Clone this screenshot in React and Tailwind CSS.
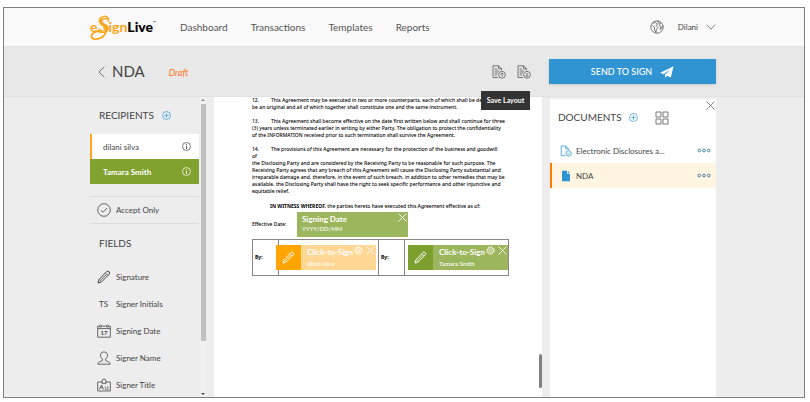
import React from 'react';

const navLinks = ['Dashboard', 'Transactions', 'Templates', 'Reports'];

const documents = [
  { name: 'Electronic Disclosures a...', active: false },
  { name: 'NDA', active: true },
];

const PenIcon = ({ className }) => (
  <svg viewBox="0 0 14 14" className={className} fill="none" stroke="currentColor" strokeWidth="1">
    <path d="M1 13 L2.2 9.4 L9.6 1.6 Q10.8 .6 12 1.8 Q13.2 3 12.2 4.2 L4.6 11.8 Z" />
    <path d="M8.4 2.9 L11 5.5 M2.2 9.4 L4.6 11.8 M4 9.9 L9.3 4.5" strokeWidth=".8" />
  </svg>
);

const CalendarIcon = () => (
  <svg viewBox="0 0 14 14" className="h-[14px] w-[14px]" fill="none" stroke="currentColor" strokeWidth="0.8">
    <path d="M2.3 2.2 H.7 V13.2 H13.3 V2.2 H11.7 M4.5 2.2 H9.5 M.7 4.6 H13.3" />
    <circle cx="3.4" cy="2.2" r="1.1" />
    <circle cx="10.6" cy="2.2" r="1.1" />
    <text x="7" y="11.4" textAnchor="middle" fontSize="6" fontWeight="700" fontFamily="Lato, sans-serif" fill="currentColor" stroke="none">17</text>
  </svg>
);

const PersonIcon = () => (
  <svg viewBox="0 0 14 14" className="h-[14px] w-[14px]" fill="none" stroke="currentColor" strokeWidth="0.8">
    <path d="M5.5 8.2 C3.6 6.6 3.2 4.5 3.8 2.6 C4.4 .5 9.6 .5 10.2 2.6 C10.8 4.5 10.4 6.6 8.5 8.2 V9.6 C10 10.6 13 10.4 13.2 13.2 H.8 C1 10.4 4 10.6 5.5 9.6 Z" />
  </svg>
);

const BadgeIcon = () => (
  <svg viewBox="0 0 14 14" className="h-[14px] w-[14px]" fill="none" stroke="currentColor" strokeWidth="0.8">
    <path d="M5.2 4 H.7 V13 H13.3 V4 H8.8 M5.2 5.6 V2.6 Q5.2 1 7 1 Q8.8 1 8.8 2.6 V5.6 Z" />
    <path d="M2.4 11.4 L4.5 7 L6.6 11.4 M3.2 9.8 H5.8 M7.8 9.2 H9.2 M10 9.2 H11.6 M7.8 11.2 H11.6" />
  </svg>
);

const PlusCircle = () => (
  <svg viewBox="0 0 9 9" className="h-[9px] w-[9px]" fill="none" stroke="#4aa3dc" strokeWidth="0.8">
    <circle cx="4.5" cy="4.5" r="4" />
    <path d="M4.5 2.2 V6.8 M2.2 4.5 H6.8" />
  </svg>
);

const InfoIcon = () => (
  <svg viewBox="0 0 9 9" className="h-[9px] w-[9px]" fill="none" stroke="currentColor" strokeWidth="0.7">
    <circle cx="4.5" cy="4.5" r="4" />
    <path d="M4.5 3.9 V7 M4.5 2 V2.9" strokeWidth="0.9" />
  </svg>
);

const CheckCircle = () => (
  <svg viewBox="0 0 14 14" className="h-[14px] w-[14px]" fill="none" stroke="currentColor" strokeWidth="0.8">
    <circle cx="7" cy="7" r="6.3" />
    <path d="M4 7.4 L6 9.2 L10 5" />
  </svg>
);

const CloseIcon = ({ className }) => (
  <svg viewBox="0 0 9 9" className={className} fill="none" stroke="currentColor" strokeWidth="0.9">
    <path d="M.5 .5 L8.5 8.5 M8.5 .5 L.5 8.5" />
  </svg>
);

const GearIcon = () => (
  <svg viewBox="0 0 10 10" className="h-[9px] w-[9px]" fill="none" stroke="currentColor" strokeWidth="0.9">
    <circle cx="5" cy="5" r="3.4" />
    <circle cx="5" cy="5" r="1.4" />
    <circle cx="5" cy="5" r="4.3" strokeDasharray="1.7 1.68" />
  </svg>
);

const LayoutIcon = ({ down }) => (
  <svg viewBox="0 0 14 14" className="h-[14px] w-[14px]" fill="none" stroke="currentColor" strokeWidth="0.9">
    <path d="M6 12.5 H1 V.8 H6.6 L9.6 3.8 V5.4 M6.6 .8 V3.8 H9.6" />
    <path d="M2.6 4 H5 M2.6 6 H7 M2.6 8 H6 M2.6 10 H5" />
    <circle cx="10" cy="9.8" r="3.4" />
    {down ? <path d="M10 8 V11.4 M8.6 10.2 L10 11.6 L11.4 10.2" /> : <path d="M10 11.6 V8.2 M8.6 9.4 L10 8 L11.4 9.4" />}
  </svg>
);

const GlobeIcon = () => (
  <svg viewBox="0 0 14 14" className="h-[14px] w-[14px]" fill="none" stroke="currentColor" strokeWidth="0.9">
    <circle cx="7" cy="7" r="6.2" />
    <path d="M2.6 3 L5.4 2.6 L7.4 4 L6.2 5.6 L8 7.6 L6.4 9.6 L6 12.4 L4.4 9.6 L4.6 7.4 L2.2 5.4 M8 1 L8.2 3 L10.4 3.4 L9.2 5.4 L11 6.6 L10 9.6 L11.8 8 L12.8 5.6" />
  </svg>
);

const Dots = () => (
  <svg viewBox="0 0 14 5" className="h-[5px] w-[14px]" fill="none" stroke="#4d7fa6" strokeWidth="1">
    <circle cx="2.3" cy="2.5" r="1.4" />
    <circle cx="7" cy="2.5" r="1.4" />
    <circle cx="11.7" cy="2.5" r="1.4" />
  </svg>
);

const DocCheckIcon = () => (
  <svg viewBox="0 0 12 12" className="h-3 w-3" fill="none" stroke="#4aa3dc" strokeWidth="0.9">
    <path d="M5.4 10.6 H1.2 V1 H5.6 L8.4 3.8 V5.2 M5.6 1 V3.8 H8.4" />
    <circle cx="8.6" cy="8.4" r="2.7" />
    <path d="M7.3 8.5 L8.3 9.4 L10 7.5" />
  </svg>
);

const DocSolidIcon = () => (
  <svg viewBox="0 0 12 12" className="h-3 w-3" fill="#2f93d1">
    <path d="M2 .8 H7 V4 H10 V11.2 H2 Z M7.8 .8 L10 3.2 H7.8 Z" />
  </svg>
);

const Logo = () => (
  <a href="#home" aria-label="eSignLive" className="relative flex h-7 w-[65px] items-center text-[14px] leading-none">
    <svg viewBox="0 0 65 28" className="absolute inset-0 h-full w-full" fill="none" stroke="#f9a61a" strokeLinecap="round">
      <path d="M13 18 C9 17 2 19 1.5 23 C1 27 8 27 12.5 24 C16 21.4 17 18 14 15" strokeWidth="1.8" />
      <path d="M9.4 9 C8.6 4 15 1.6 18 5" strokeWidth="1.4" />
    </svg>
    <span className="font-bold text-[#f9a61a]">e</span>
    <span className="-mt-1 w-[11px] font-['Liberation_Serif',serif] text-[23px] font-bold italic text-[#f9a61a]">S</span>
    <span className="font-bold text-[#f9a61a]">ign</span>
    <span className="font-black text-black">Live</span>
    <span className="self-start pt-2 text-[4px] text-black">™</span>
  </a>
);

const fields = [
  { label: 'Signature', icon: <PenIcon className="h-[14px] w-[14px]" /> },
  { label: 'Signer Initials', icon: <span className="pl-[2px]">TS</span> },
  { label: 'Signing Date', icon: <CalendarIcon /> },
  { label: 'Signer Name', icon: <PersonIcon /> },
  { label: 'Signer Title', icon: <BadgeIcon /> },
];

function SignField({ signer, boxClass, penClass }) {
  return (
    <div className={`flex h-[25px] w-[100px] font-[Lato,sans-serif] text-white ${boxClass}`}>
      <div className={`flex w-[25px] items-center justify-center ${penClass}`}>
        <PenIcon className="h-[13px] w-[13px]" />
      </div>
      <div className="flex-1 whitespace-nowrap pl-[6px] pt-[2px]">
        <div className="text-[8px] font-bold leading-[11px]">Click-to-Sign</div>
        <div className="text-[6px] leading-[12px]">{signer}</div>
      </div>
      <div className="absolute right-[1px] top-[1px] flex items-center gap-[3px]">
        <button type="button" aria-label="Field settings"><GearIcon /></button>
        <button type="button" aria-label="Remove field"><CloseIcon className="h-[9px] w-[9px]" /></button>
      </div>
    </div>
  );
}

function Header() {
  return (
    <header className="bg-[#f9f9f9]">
      <div className="mx-auto flex h-[38px] w-full max-w-[628px] items-center pr-[2px]">
        <Logo />
        <nav className="ml-[25px] flex gap-[23px] text-[10px] text-[#555]">
          {navLinks.map((link) => (
            <a key={link} href={`#${link.toLowerCase()}`}>{link}</a>
          ))}
        </nav>
        <button type="button" aria-label="Language" className="ml-auto text-[#666]"><GlobeIcon /></button>
        <button type="button" className="ml-[14px] flex items-center gap-2 text-[8px] text-[#444]">
          Dilani
          <svg viewBox="0 0 10 6" className="h-[6px] w-[10px]" fill="none" stroke="#777" strokeWidth="0.9">
            <path d="M.8 .6 L5 5.2 L9.2 .6" />
          </svg>
        </button>
      </div>
    </header>
  );
}

function Toolbar() {
  return (
    <div className="border-y border-[#e2e2e2] bg-[#e8e8e8]">
      <div className="mx-auto flex h-[49px] w-full max-w-[628px] items-center pr-[2px]">
        <button type="button" aria-label="Back" className="ml-2">
          <svg viewBox="0 0 7 12" className="h-3 w-[7px]" fill="none" stroke="#777" strokeWidth="1">
            <path d="M6.4 .8 L1 6 L6.4 11.2" />
          </svg>
        </button>
        <h1 className="ml-[7px] text-[15px] text-[#444]">NDA</h1>
        <span className="ml-6 pt-[2px] text-[9px] italic text-[#ff7417]">Draft</span>
        <button type="button" aria-label="Apply Layout" className="ml-auto text-[#666]"><LayoutIcon /></button>
        <div className="relative ml-[11px] flex">
          <button type="button" aria-describedby="layout-tip" aria-label="Save Layout" className="text-[#666]"><LayoutIcon down /></button>
          <div id="layout-tip" role="tooltip" className="absolute right-[1px] top-[26px] z-10 flex h-[19px] w-[49px] items-center justify-center whitespace-nowrap bg-[#333] text-[7px] font-bold text-white">
            Save Layout
          </div>
        </div>
        <button type="button" className="ml-[18px] flex h-[25px] w-[167px] items-center justify-center gap-2 bg-[#3094d2] text-[9px] font-medium text-white shadow-sm">
          SEND TO SIGN
          <svg viewBox="0 0 14 12" className="h-3 w-[14px]" fill="currentColor">
            <path d="M13.6 .2 L.2 6.8 L3.6 8.2 L11 2.8 L5 8.8 L5.2 12 L7 9.8 L10.8 11.4 Z" />
          </svg>
        </button>
      </div>
    </div>
  );
}

function Sidebar() {
  return (
    <aside className="flex w-[116px] shrink-0 overflow-hidden text-[#444]">
      <div className="w-[109px]">
        <div className="flex h-9 items-center gap-2 pl-[9px]">
          <h2 className="text-[10px]">RECIPIENTS</h2>
          <button type="button" aria-label="Add recipient"><PlusCircle /></button>
        </div>
        <button type="button" className="mt-[1px] flex h-[25px] w-full items-center justify-between border-l-2 border-[#ffa51f] bg-white pl-[11px] pr-2 text-[8px]">
          dilani silva <InfoIcon />
        </button>
        <button type="button" className="flex h-[25px] w-full items-center justify-between bg-[#82a230] pl-[13px] pr-2 text-[8px] font-bold text-white">
          Tamara Smith <InfoIcon />
        </button>
        <button type="button" className="mt-3 flex h-7 w-full items-center gap-[5px] border-y border-[#dcdcdc] pl-[7px] text-[8px]">
          <CheckCircle /> Accept Only
        </button>
        <h2 className="mt-3 pl-[9px] text-[10px] leading-[14px]">FIELDS</h2>
        <ul className="mt-[13px]">
          {fields.map((field) => (
            <li key={field.label}>
              <button type="button" className="flex h-[27px] items-center pl-[7px] text-[8px]">
                <span className="flex w-[19px]">{field.icon}</span>
                {field.label}
              </button>
            </li>
          ))}
        </ul>
      </div>
      <div className="ml-auto flex w-[6px] flex-col items-center justify-between bg-[#f1f1f1] py-[2px]">
        <span className="h-0 w-0 border-x-2 border-b-2 border-x-transparent border-b-[#888]" />
        <span className="mb-auto mt-[3px] h-[80%] w-[5px] bg-[#c1c1c1]" />
        <span className="h-0 w-0 border-x-2 border-t-2 border-x-transparent border-t-[#444]" />
      </div>
    </aside>
  );
}

function Paragraph({ number, lines }) {
  return (
    <p className="mb-[7px]">
      <span className="inline-block w-[19px]">{number}</span>
      {lines.map((line) => (
        <React.Fragment key={line}>{line}<br /></React.Fragment>
      ))}
    </p>
  );
}

function DocumentPage() {
  return (
    <main className="relative ml-2 min-w-0 flex-1 overflow-hidden bg-white">
      <div className="w-[290px] whitespace-nowrap pl-[38px] font-['Noto_Sans',sans-serif] text-[5px] font-medium leading-[7px] text-black">
        <Paragraph
          number="12."
          lines={[
            'This Agreement may be executed in two or more counterparts, each of which shall be de',
            'be an original and all of which together shall constitute one and the same instrument.',
          ]}
        />
        <Paragraph
          number="13."
          lines={[
            'This Agreement shall become effective on the date first written below and shall continue for three',
            '(3) years unless terminated earlier in writing by either Party. The obligation to protect the confidentiality',
            'of the INFORMATION received prior to such termination shall survive the Agreement.',
          ]}
        />
        <Paragraph
          number="14."
          lines={[
            'The provisions of this Agreement are necessary for the protection of the business and goodwill',
            'of',
            'the Disclosing Party and are considered by the Receiving Party to be reasonable for such purpose. The',
            'Receiving Party agrees that any breach of this Agreement will cause the Disclosing Party substantial and',
            'irreparable damage and, therefore, in the event of such breach, in addition to other remedies that may be',
            'available, the Disclosing Party shall have the right to seek specific performance and other injunctive and',
            'equitable relief.',
          ]}
        />
        <p className="pl-[18px] pt-[1px]"><b>IN WITNESS WHEREOF,</b> the parties hereto have executed this Agreement effective as of:</p>
        <div className="flex items-center pt-[2px]">
          <span className="w-[45px]">Effective Date:</span>
          <div className="relative h-[25px] w-[111px] bg-[#9cb65d] pl-[5px] pt-[2px] font-[Lato,sans-serif] text-white">
            <div className="text-[8px] font-bold leading-[11px]">Signing Date</div>
            <div className="text-[6px] leading-[8px]">YYYY/DD/MM</div>
            <button type="button" aria-label="Remove field" className="absolute right-[1px] top-[1px]"><CloseIcon className="h-[9px] w-[9px]" /></button>
          </div>
        </div>
        <table className="mt-[2px] w-[257px] border-collapse">
          <tbody>
            <tr className="h-9">
              <td className="w-[26px] border border-[#888] pl-[2px] font-bold">By:</td>
              <td className="relative w-[100px] border border-[#888]">
                <div className="absolute -left-[3px] top-[5px]">
                  <SignField signer="dilani silva" boxClass="bg-[#ffd795]" penClass="bg-[#ffa400]" />
                </div>
              </td>
              <td className="w-[26px] border border-[#888] pl-[2px] font-bold">By:</td>
              <td className="relative border border-[#888]">
                <div className="absolute left-[3px] top-[5px]">
                  <SignField signer="Tamara Smith" boxClass="bg-[#9cb65d]" penClass="bg-[#7d9f2e]" />
                </div>
              </td>
            </tr>
          </tbody>
        </table>
      </div>
      <div className="absolute bottom-[9px] right-0 h-[34px] w-[3px] rounded-sm bg-[#808080]" />
    </main>
  );
}

function DocumentsPanel() {
  return (
    <aside className="ml-2 mt-[2px] w-[166px] shrink-0 bg-white text-[#444]">
      <div className="relative flex h-[37px] items-center pl-2">
        <h2 className="text-[10px]">DOCUMENTS</h2>
        <button type="button" aria-label="Add document" className="ml-[7px]"><PlusCircle /></button>
        <button type="button" aria-label="Page thumbnails" className="ml-[17px]">
          <svg viewBox="0 0 14 14" className="h-[14px] w-[14px]" fill="none" stroke="#777" strokeWidth="1">
            <path d="M1 1 H6 V6 H1 Z M8 1 H13 V6 H8 Z M1 8 H6 V13 H1 Z M8 8 H13 V13 H8 Z" />
          </svg>
        </button>
        <button type="button" aria-label="Close documents" className="absolute right-[1px] top-[2px] text-[#777]"><CloseIcon className="h-[9px] w-[9px]" /></button>
      </div>
      <ul className="pt-[2px]">
        {documents.map((doc) => (
          <li
            key={doc.name}
            className={`flex h-[25px] items-center border-l-2 pl-2 pr-[5px] text-[8px] ${doc.active ? 'border-[#ff7a00] bg-[#fff5e1]' : 'border-transparent'}`}
          >
            {doc.active ? <DocSolidIcon /> : <DocCheckIcon />}
            <a href="#document" className="ml-1">{doc.name}</a>
            <button type="button" aria-label={`${doc.name} options`} className="ml-auto"><Dots /></button>
          </li>
        ))}
      </ul>
    </aside>
  );
}

function App() {
  return (
    <div className="h-screen bg-white pb-1 pl-[3px] pr-[5px] pt-[7px] font-[Lato,sans-serif]">
      <div className="flex h-full flex-col overflow-hidden border border-[#808080] bg-[#ededed]">
        <Header />
        <Toolbar />
        <div className="mx-auto flex min-h-0 w-full max-w-[628px] flex-1 pr-[2px]">
          <Sidebar />
          <DocumentPage />
          <DocumentsPanel />
        </div>
      </div>
    </div>
  );
}

export default App;
